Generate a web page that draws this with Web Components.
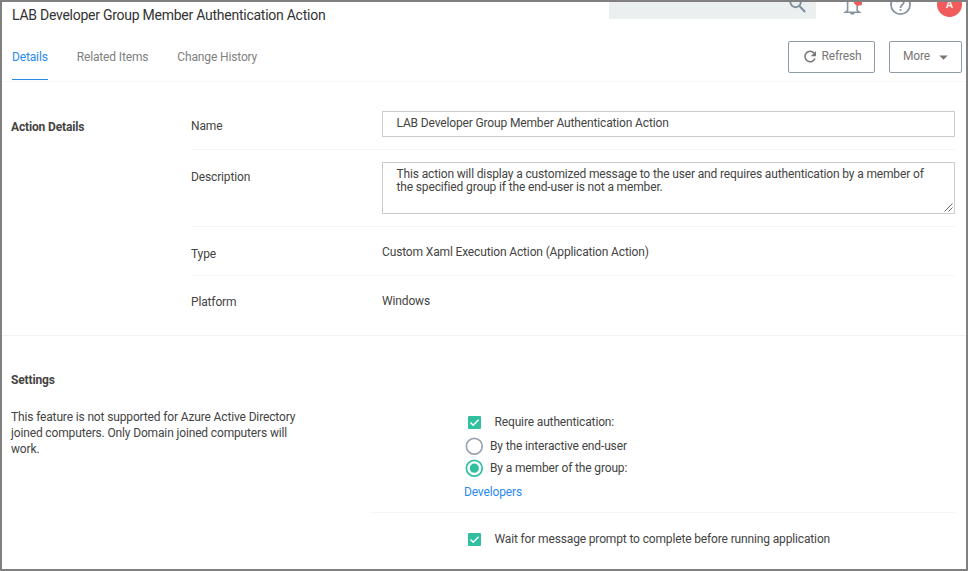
<!DOCTYPE html>
<html lang="en"><head><meta charset="utf-8"><title>Action details</title>
<style>
html,body{margin:0;height:100%}
body{font:12px/16px Roboto,"Liberation Sans",sans-serif;letter-spacing:-.145px;color:#444;background:#fff}
</style></head><body>
<action-page></action-page>
<script>
const define=(name,html)=>{
  const t=document.createElement('template');t.innerHTML=html;
  customElements.define(name,class extends HTMLElement{
    constructor(){super();this.attachShadow({mode:'open'}).append(t.content.cloneNode(true));}
  });
};
define('search-box',`<style>:host{display:flex;justify-content:flex-end;width:207px;height:17px;background:#ebefef;overflow:hidden}svg{display:block;margin:-8px 9px 0 0;flex:none}</style>
<svg width="20" height="20" viewBox="0 0 20 20" fill="none" stroke="#7e8c99" stroke-width="1.9"><circle cx="8.6" cy="8" r="5.2"/><path d="M12.4 12l5.8 6"/></svg>`);
define('alert-bell',`<style>:host{display:block;width:20px;height:17px;overflow:hidden}svg{display:block}</style>
<svg width="20" height="17" viewBox="0 0 20 17"><path d="M5.6 0v8.6L3.4 10.3h14L15.2 8.6V0" fill="none" stroke="#8794a1" stroke-width="1.6"/><path d="M8 11h4.8a2.4 1.8 0 0 1-4.8 0z" fill="#8794a1"/><circle cx="16.5" cy="-1" r="4.8" fill="#f15b5b"/></svg>`);
define('help-icon',`<style>:host{display:block;width:22px;height:17px;overflow:hidden}svg{display:block}</style>
<svg width="22" height="17" viewBox="0 0 22 17" fill="none" stroke="#8794a1" stroke-width="1.8"><circle cx="11.5" cy="2.7" r="9.5"/><path d="M8.2.2a3.3 3.3 0 1 1 5.7 2C12.6 3.5 11.5 4 11.5 6"/><path d="M11.5 7.1v1.8"/></svg>`);
define('user-avatar',`<style>:host{display:flex;width:25px;height:15px;overflow:hidden;align-items:flex-end}div{flex:none;width:25px;height:25px;border-radius:50%;background:#f15b5b;color:#fff;text-align:center;font-size:10.5px;font-weight:500;line-height:25px}</style><div><slot></slot></div>`);
define('top-bar',`<style>:host{display:flex;height:28px;align-items:flex-start;padding-left:10px}h1{margin:4px 0 0;flex:1;font-size:14px;line-height:18px;font-weight:400;color:#333;letter-spacing:-.255px}alert-bell{margin-left:26px}help-icon{margin-left:27px}user-avatar{margin:0 4px 0 26px}</style>
<h1><slot></slot></h1><search-box></search-box><alert-bell></alert-bell><help-icon></help-icon><user-avatar>A</user-avatar>`);
define('tab-item',`<style>:host{display:block;box-sizing:border-box;height:50px;padding-top:19px;color:#808080;border-bottom:1px solid transparent}:host([active]){color:#2a8af0;border-color:#2a8af0}</style><slot></slot>`);
define('outline-button',`<style>:host{display:flex;box-sizing:border-box;height:32px;border:1px solid #8f9ba8;border-radius:2px;color:#777;align-items:center;justify-content:center;padding-bottom:2px}</style><slot></slot>`);
define('tab-bar',`<style>:host{display:flex;height:51px;border-bottom:1px solid #f7f7f7;padding:0 4px 0 10px}nav{display:flex;gap:29px;flex:1}.r{width:87px;padding-left:2px}.m{width:73px}.b{display:flex;gap:14px;padding-top:11px}.r svg{margin:2px 4px 0 0}.m svg{margin:3px 0 0 9px}</style>
<nav><tab-item active>Details</tab-item><tab-item>Related Items</tab-item><tab-item>Change History</tab-item></nav>
<div class="b"><outline-button class="r"><svg width="14" height="14" viewBox="0 0 14 14"><path d="M11.2 3.2A5.2 5.2 0 1 0 12 8.5" fill="none" stroke="#777" stroke-width="1.5"/><path d="M13 1v5.3H7.7z" fill="#777"/></svg>Refresh</outline-button><outline-button class="m">More<svg width="9" height="5"><path d="M.3 .5h8.4L4.5 4.7z" fill="#777"/></svg></outline-button></div>`);
define('field-row',`<style>:host{display:grid;box-sizing:border-box;grid-template-columns:191px 1fr;border-bottom:1px solid #f5f5f5}:host([last]){border:0}</style><slot name="label"></slot><slot></slot>`);
define('text-field',`<style>:host{display:block;box-sizing:border-box;border:1px solid #ccc;padding:5px 13.5px;line-height:13px;position:relative}svg{position:absolute;right:1px;bottom:1px;display:none}:host([multiline]) svg{display:block}</style><slot></slot><svg width="9" height="9" viewBox="0 0 9 9"><path d="M.5 8.5l8-8M4.5 8.5l4-4" stroke="#555" stroke-width=".9"/></svg>`);
define('action-details',`<style>:host{display:grid;box-sizing:border-box;grid-template-columns:180px 1fr;height:254px;border-bottom:1px solid #f3f3f3;padding:28px 11px 0 9px}h2{font-size:12px;line-height:16px;font-weight:700;margin:9px 0 0}.a{height:40px}.b{height:77px}.c{height:49px}.a span{padding-top:8px}.b span{padding-top:19px}.b text-field{margin-top:12px;height:52px;align-self:start}.a text-field{height:26px;margin-top:1px}.c span{padding-top:19px}.c span+span{padding-top:17px}.d span{padding-top:18px}.d span+span{padding-top:17px}</style>
<h2>Action Details</h2><section>
<field-row class="a"><span slot="label">Name</span><text-field>LAB Developer Group Member Authentication Action</text-field></field-row>
<field-row class="b"><span slot="label">Description</span><text-field multiline>This action will display a customized message to the user and requires authentication by a member of<br>the specified group if the end-user is not a member.</text-field></field-row>
<field-row class="c"><span slot="label">Type</span><span>Custom Xaml Execution Action (Application Action)</span></field-row>
<field-row class="d" last><span slot="label">Platform</span><span>Windows</span></field-row></section>`);
define('check-option',`<style>:host{display:flex;align-items:center;gap:13.5px;padding-left:4px;height:16px}svg{margin-top:1px}</style><svg width="13" height="13" viewBox="0 0 13 13"><rect width="13" height="13" rx="1" fill="#30c0a0"/><path d="M2.5 6.5l2.7 2.7L10.6 3.8" fill="none" stroke="#fff" stroke-width="1.5"/></svg><slot></slot>`);
define('radio-option',`<style>:host{display:flex;align-items:center;gap:7px;padding-left:1px;height:22px}circle{fill:none;stroke:#9aa5b1;stroke-width:1.7}.dot{display:none}:host([checked]) circle{stroke:#30c0a0}:host([checked]) .dot{display:block;fill:#30c0a0;stroke:none}</style><svg width="18" height="18" viewBox="0 0 18 18"><circle cx="9.3" cy="9.2" r="7.9"/><circle class="dot" cx="9.3" cy="9.2" r="4.6"/></svg><slot></slot>`);
define('settings-section',`<style>:host{display:flex;justify-content:space-between;padding:36px 11px 0 9px}h2{font-size:12px;line-height:16px;font-weight:700;margin:0 0 21px}p{margin:0}aside{width:300px}section{width:585px;padding-top:42px}.g{height:98px;border-bottom:1px solid #f5f5f5;padding-left:94px}.w{padding:18px 0 0 94px}.g radio-option:first-of-type{margin-top:5px}a{display:block;margin-top:5px;color:#2a8af0}</style>
<aside><h2>Settings</h2><p>This feature is not supported for Azure Active Directory<br>joined computers. Only Domain joined computers will<br>work.</p></aside>
<section><div class="g"><check-option>Require authentication:</check-option><radio-option>By the interactive end-user</radio-option><radio-option checked>By a member of the group:</radio-option><a>Developers</a></div><div class="w"><check-option>Wait for message prompt to complete before running application</check-option></div></section>`);
define('action-page',`<style>:host{display:block;box-sizing:border-box;width:968px;height:571px;border:2px solid #808080;background:#fff;overflow:hidden}</style>
<top-bar>LAB Developer Group Member Authentication Action</top-bar><tab-bar></tab-bar><action-details></action-details><settings-section></settings-section>`);
</script></body></html>
